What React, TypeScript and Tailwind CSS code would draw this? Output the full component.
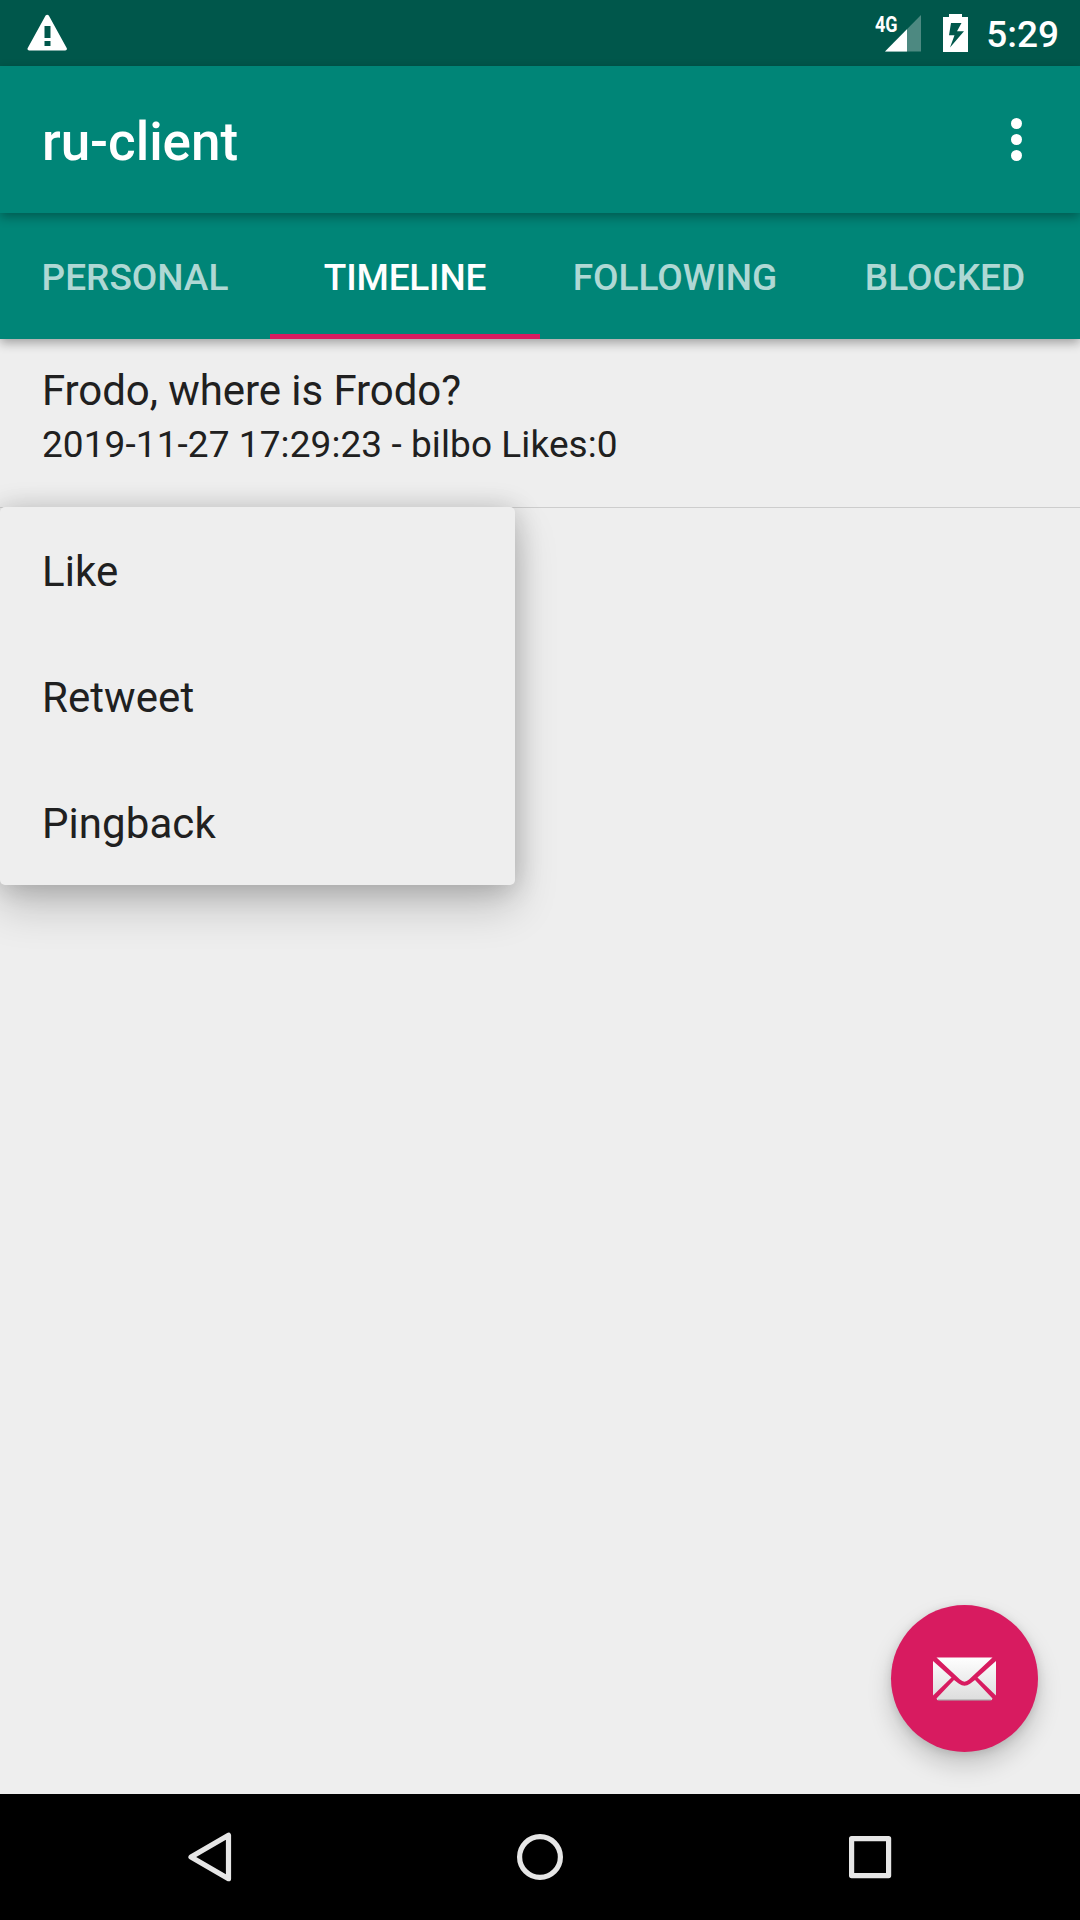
const tabs = ['Personal', 'Timeline', 'Following', 'Blocked'];
const menuItems = ['Like', 'Retweet', 'Pingback'];

function StatusBar() {
  return (
    <div className="flex h-[66px] items-start bg-[#00574b] text-white">
      <svg className="ml-[27px] mt-[14px]" width="41" height="37" viewBox="27 14 41 37">
        <path
          fillRule="evenodd"
          fill="#fff"
          d="M45.6 15.6Q47.2 13.8 48.8 15.6L66.8 48.2Q67.4 50.4 65.2 50.5H29.2Q27 50.4 27.6 48.2ZM44.5 26V38H50.5V26ZM44.5 41V46H50.5V41Z"
        />
      </svg>
      <div className="relative ml-auto mt-[14px] h-[38px] w-[47px]">
        <span className="absolute left-0 top-0 origin-left scale-x-[0.8] text-[22.5px] leading-[20px] font-bold">4G</span>
        <svg className="absolute right-0 top-0" width="37" height="38" viewBox="885 14 37 38">
          <path d="M921 15V51.4H885Z" fill="#fff" opacity="0.3" />
          <path d="M907 29.3V51.4H885Z" fill="#fff" />
        </svg>
      </div>
      <svg className="ml-[21px] mt-[14px]" width="25" height="38" viewBox="943 14 25 38">
        <path
          fillRule="evenodd"
          fill="#fff"
          d="M949 14H962V17H968V52H943V17H949ZM951 23L949 35.3H954.5L950 47.5L964 31.3H957L961.5 23Z"
        />
      </svg>
      <span className="ml-[17px] mr-[21px] mt-[13px] w-[74px] text-right text-[37px] leading-[44px] font-medium">5:29</span>
    </div>
  );
}

function Toolbar() {
  return (
    <header className="relative z-20 flex h-[147px] items-center bg-[#008577] pl-[42px] shadow-[0_4px_10px_rgba(0,0,0,0.32)]">
      <h1 className="mt-[5px] text-[53px] leading-[60px] font-medium tracking-[-0.05px] text-white">ru-client</h1>
      <button className="ml-auto mr-[58px] flex flex-col gap-[5px]" aria-label="More options">
        <span className="size-[11px] rounded-full bg-white" />
        <span className="size-[11px] rounded-full bg-white" />
        <span className="size-[11px] rounded-full bg-white" />
      </button>
    </header>
  );
}

function TabBar() {
  return (
    <nav className="relative z-10 grid h-[126px] grid-cols-4 bg-[#008577] text-[37px] font-medium shadow-[0_4px_10px_rgba(0,0,0,0.32)]">
      {tabs.map((tab) => (
        <button
          key={tab}
          className={
            tab === 'Timeline'
              ? 'border-b-[5px] border-[#d81b60] pt-[8px] tracking-[-0.2px] text-white uppercase'
              : 'pt-[3px] text-white/70 uppercase'
          }
        >
          {tab}
        </button>
      ))}
    </nav>
  );
}

function ContextMenu() {
  return (
    <ul className="absolute left-0 top-full w-[515px] rounded-[5px] bg-[#eee] shadow-[0_22px_44px_rgba(0,0,0,0.19),0_2px_28px_rgba(0,0,0,0.2)]">
      {menuItems.map((item) => (
        <li key={item} className="flex h-[126px] items-center pl-[42px] pt-[2px] text-[42px] tracking-[0.07px]">
          {item}
        </li>
      ))}
    </ul>
  );
}

function ComposeButton() {
  return (
    <button
      aria-label="Compose"
      className="absolute right-[42px] bottom-[42px] flex size-[147px] items-center justify-center rounded-full bg-[#d81b60] shadow-[0_13px_24px_rgba(0,0,0,0.18),0_2px_10px_rgba(0,0,0,0.12)]"
    >
      <svg width="63" height="44" viewBox="0 0 63 44">
        <defs>
          <linearGradient id="paper" x1="0" y1="0" x2="0" y2="44" gradientUnits="userSpaceOnUse">
            <stop offset="0" stopColor="#fff" />
            <stop offset="1" stopColor="#dcdcdc" />
          </linearGradient>
        </defs>
        <g fill="url(#paper)">
          <path d="M3.5 0.5H59.5L36 22.5Q31.5 26.8 27 22.5Z" />
          <path d="M0 4L18.5 20.5L0 38.5Z" />
          <path d="M63 4L44.5 20.5L63 38.5Z" />
          <path d="M21 23L26 26.7Q31.5 30.8 37 26.7L42 23L59.5 41.5Q59 43.5 57.5 43.5H5.5Q4 43.5 3.5 41.5Z" />
        </g>
        <path d="M5 43H58" stroke="#000" strokeOpacity="0.28" strokeWidth="1.2" />
      </svg>
    </button>
  );
}

function NavigationBar() {
  return (
    <footer className="h-[126px] bg-black">
      <svg width="1080" height="126" fill="none" stroke="#e6e6e6" strokeWidth="5.2" strokeLinejoin="round">
        <path d="M228.5 41.3V84.7L191 63Z" />
        <circle cx="540" cy="63" r="20.4" />
        <rect x="851.6" y="44.6" width="37" height="37" />
      </svg>
    </footer>
  );
}

export default function App() {
  return (
    <div className="flex h-[1920px] w-[1080px] flex-col overflow-hidden bg-[#eee] font-['Roboto',sans-serif] text-[#202020]">
      <StatusBar />
      <Toolbar />
      <TabBar />
      <main className="relative flex-1">
        <article className="relative h-[169px] border-b border-[#cdcdcd] pl-[42px] pt-[27px]">
          <h2 className="text-[42px] leading-[50px] tracking-[-0.07px]">Frodo, where is Frodo?</h2>
          <p className="mt-[6px] text-[37px] leading-[46px] tracking-[0.08px]">2019-11-27 17:29:23 - bilbo Likes:0</p>
          <ContextMenu />
        </article>
        <ComposeButton />
      </main>
      <NavigationBar />
    </div>
  );
}
